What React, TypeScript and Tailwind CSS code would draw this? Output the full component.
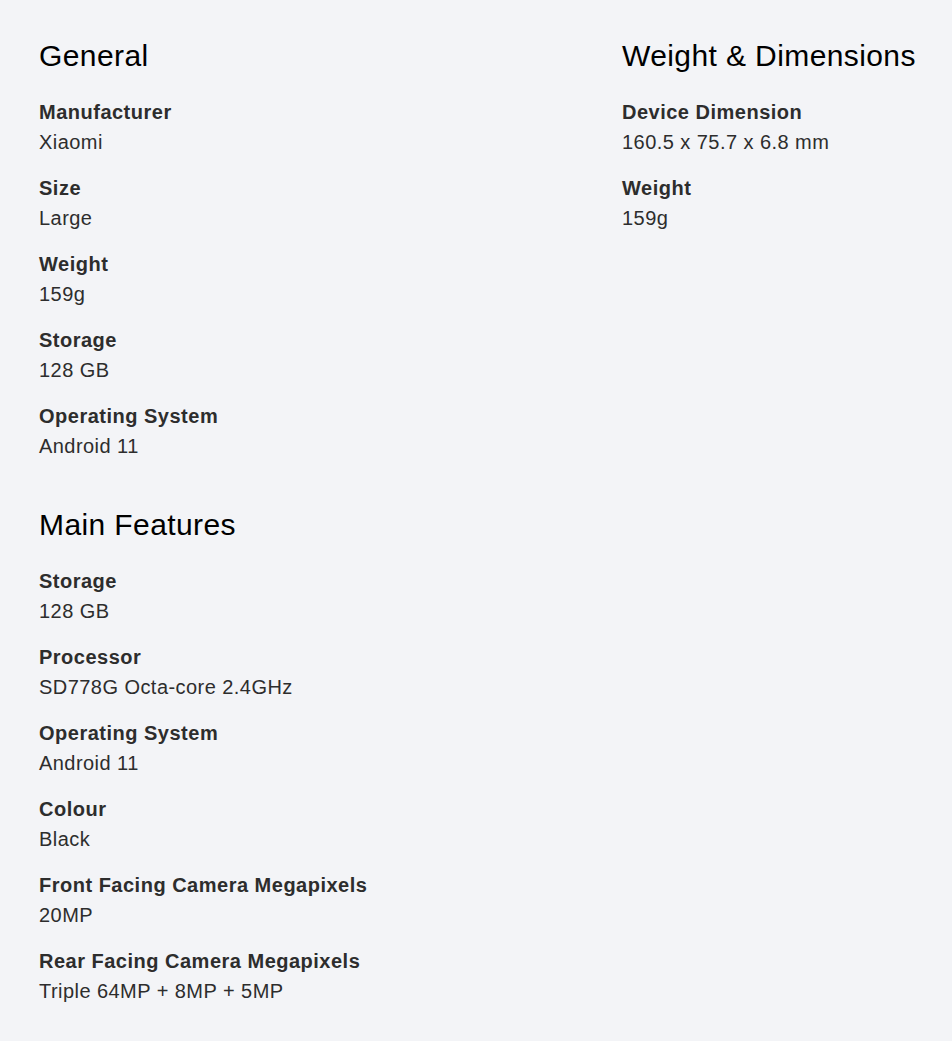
const general = [
  { label: "Manufacturer", value: "Xiaomi" },
  { label: "Size", value: "Large" },
  { label: "Weight", value: "159g" },
  { label: "Storage", value: "128 GB" },
  { label: "Operating System", value: "Android 11" },
];

const mainFeatures = [
  { label: "Storage", value: "128 GB" },
  { label: "Processor", value: "SD778G Octa-core 2.4GHz" },
  { label: "Operating System", value: "Android 11" },
  { label: "Colour", value: "Black" },
  { label: "Front Facing Camera Megapixels", value: "20MP" },
  { label: "Rear Facing Camera Megapixels", value: "Triple 64MP + 8MP + 5MP" },
];

const dimensions = [
  { label: "Device Dimension", value: "160.5 x 75.7 x 6.8 mm" },
  { label: "Weight", value: "159g" },
];

function SpecSection({
  title,
  items,
}: {
  title: string;
  items: { label: string; value: string }[];
}) {
  return (
    <section>
      <h2 className="text-[30px] leading-[36px] tracking-[0.4px] text-black whitespace-nowrap">
        {title}
      </h2>
      <dl className="mt-[23px] flex flex-col gap-4">
        {items.map((item) => (
          <div key={item.label}>
            <dt className="text-[20px] leading-[30px] font-bold tracking-[0.5px] text-[#2d2d2d]">
              {item.label}
            </dt>
            <dd className="text-[20px] leading-[30px] tracking-[0.45px] text-[#2d2d2d]">
              {item.value}
            </dd>
          </div>
        ))}
      </dl>
    </section>
  );
}

export default function App() {
  return (
    <div
      className="min-h-[1041px] bg-[#f3f4f7] pl-[39px] pt-[38px]"
      style={{ fontFamily: '"Liberation Sans", Arial, sans-serif' }}
    >
      <div className="flex">
        <div className="w-[583px] flex flex-col gap-[46px]">
          <SpecSection title="General" items={general} />
          <SpecSection title="Main Features" items={mainFeatures} />
        </div>
        <div>
          <SpecSection title="Weight & Dimensions" items={dimensions} />
        </div>
      </div>
    </div>
  );
}
